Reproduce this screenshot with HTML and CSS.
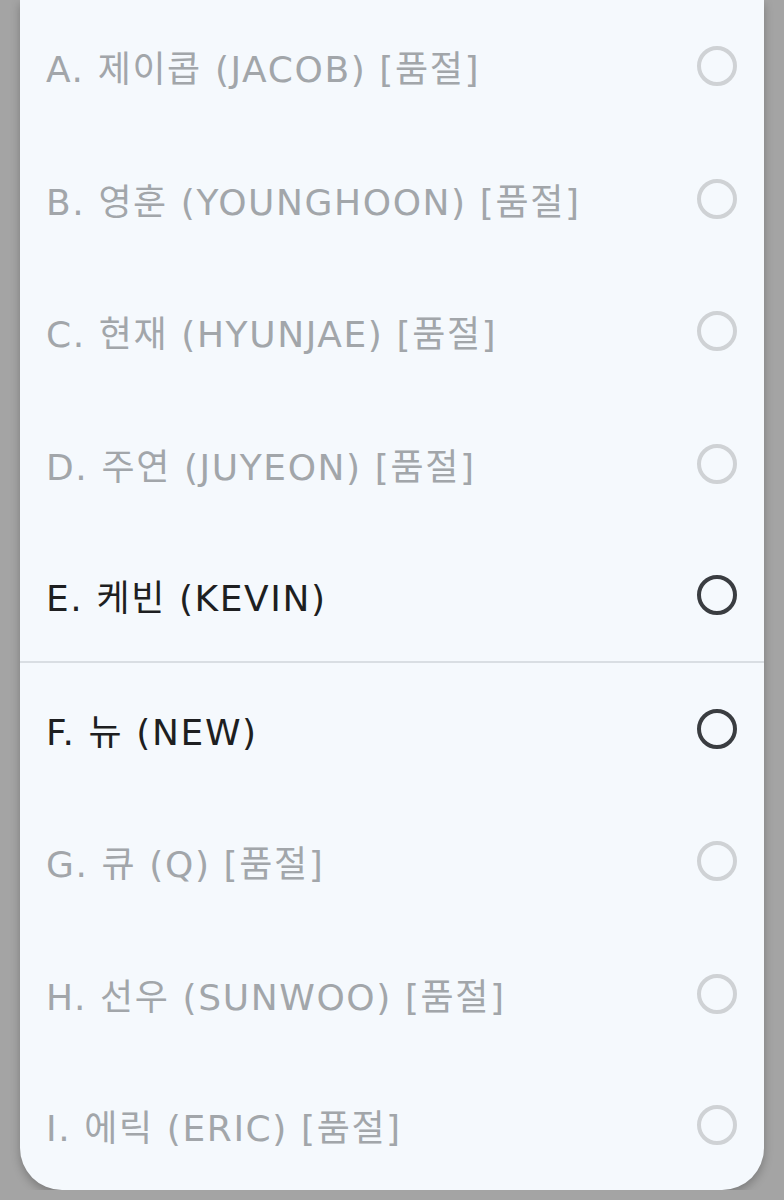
FILE: index.html
```html
<!DOCTYPE html>
<html lang="ko">
<head>
  <meta charset="UTF-8">
  <title>멤버 선택</title>
  <link rel="stylesheet" href="styles.css">
</head>
<body>
  <div class="sheet">
    <ul class="options">
      <li class="option sold-out"><span class="label">A. 제이콥 (JACOB) [품절]</span><span class="radio"></span></li>
      <li class="option sold-out"><span class="label">B. 영훈 (YOUNGHOON) [품절]</span><span class="radio"></span></li>
      <li class="option sold-out"><span class="label">C. 현재 (HYUNJAE) [품절]</span><span class="radio"></span></li>
      <li class="option sold-out"><span class="label">D. 주연 (JUYEON) [품절]</span><span class="radio"></span></li>
      <li class="option divided"><span class="label">E. 케빈 (KEVIN)</span><span class="radio"></span></li>
      <li class="option"><span class="label">F. 뉴 (NEW)</span><span class="radio"></span></li>
      <li class="option sold-out"><span class="label">G. 큐 (Q) [품절]</span><span class="radio"></span></li>
      <li class="option sold-out"><span class="label">H. 선우 (SUNWOO) [품절]</span><span class="radio"></span></li>
      <li class="option sold-out"><span class="label">I. 에릭 (ERIC) [품절]</span><span class="radio"></span></li>
    </ul>
  </div>
</body>
</html>
```

FILE: styles.css
```css
body { margin: 0; padding: 0; background-color: #a4a4a4; font-family: "DejaVu Sans", "Noto Sans CJK KR", sans-serif; overflow: hidden; }

.sheet {
  margin: 0 20px;
  padding-top: 0;
  background-color: #f5f9fd;
  border-radius: 0 0 42px 42px;
  box-shadow: 0 4px 10px rgba(0,0,0,0.25);
}
.options { list-style-type: none; margin: 0; padding: 0; }
.option {
  height: 132.5px;
  box-sizing: border-box;
  display: flex;
  align-items: center;
  justify-content: space-between;
  padding: 0 27px 0 26px;
  color: #1e1f21;
  font-size: 36px;
  letter-spacing: 1.6px;
}
.option:last-child { height: 130px; }
.option.divided { border-bottom: 2px solid #d9dee3; }
.option.sold-out { color: #a2a6aa; }

.radio {
  width: 40px;
  height: 40px;
  box-sizing: border-box;
  border: 4px solid #3a3d41;
  border-radius: 50%;
}
.sold-out .radio { border-color: #cfd2d5; }
```
